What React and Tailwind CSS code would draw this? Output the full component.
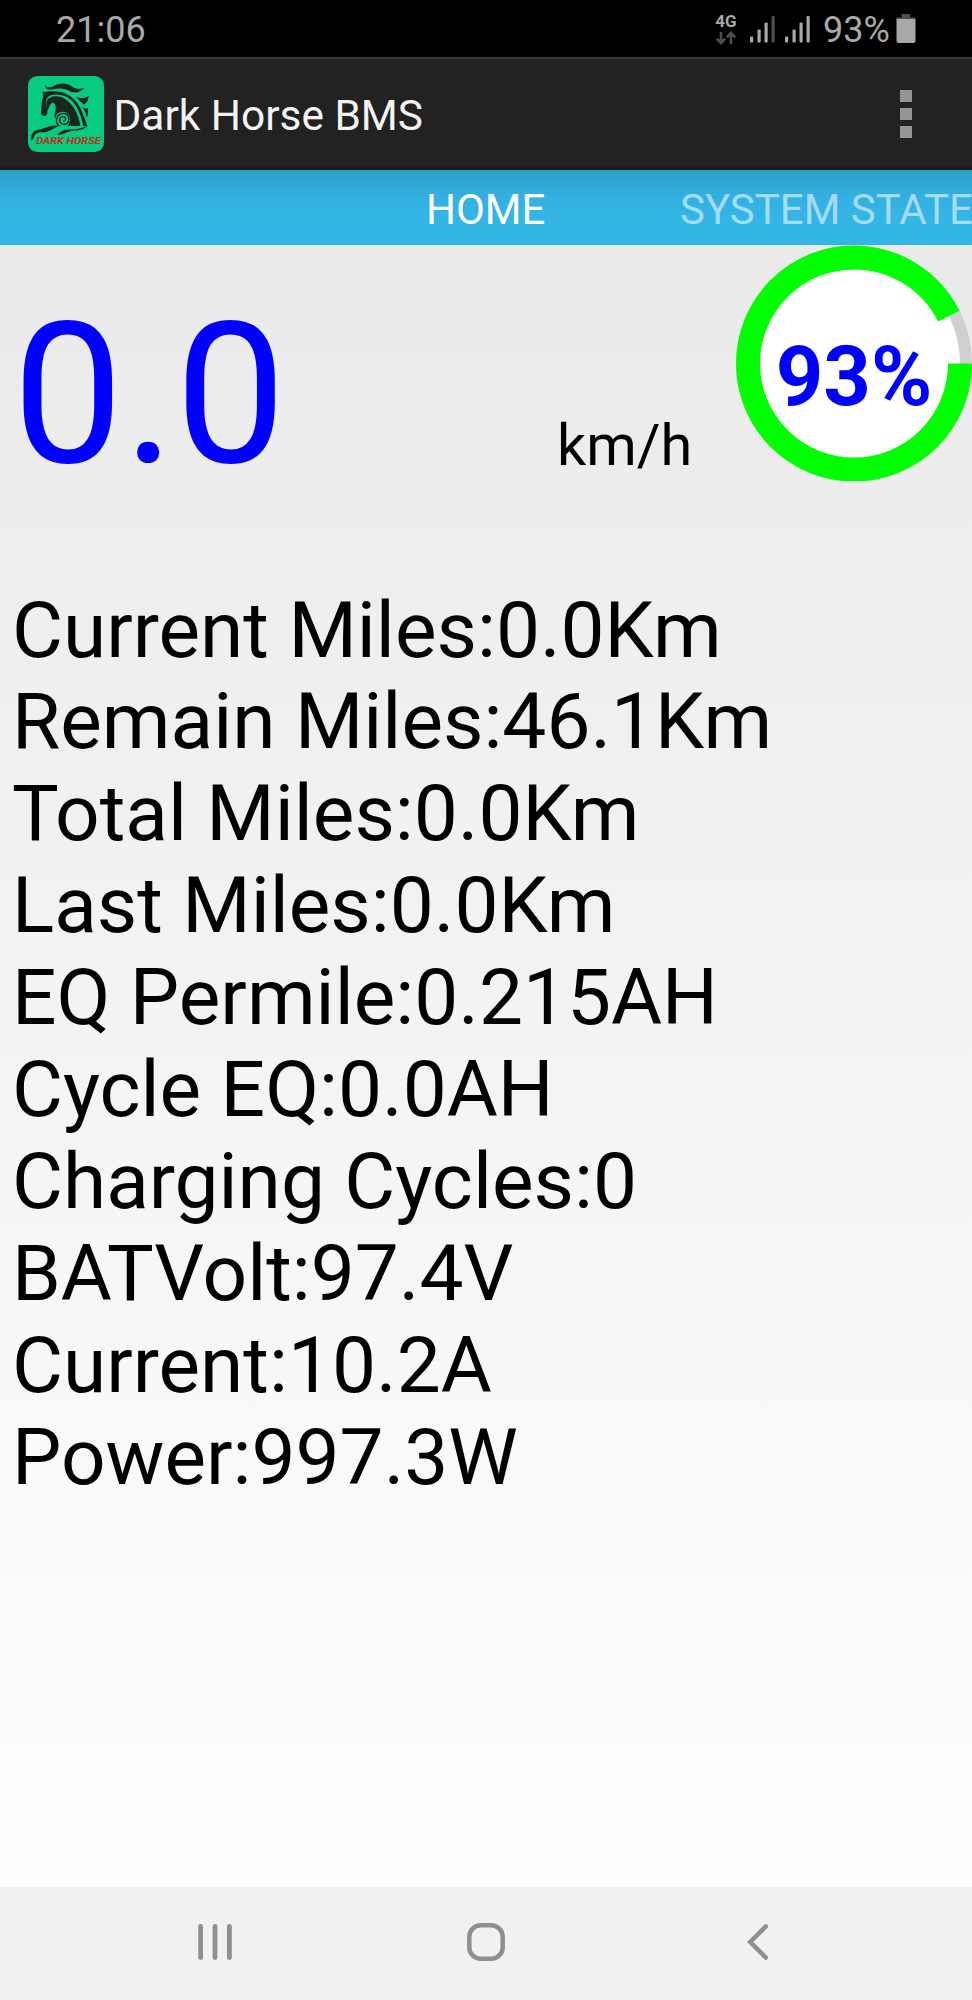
const stats = [
  ['Current Miles', '0.0Km'],
  ['Remain Miles', '46.1Km'],
  ['Total Miles', '0.0Km'],
  ['Last Miles', '0.0Km'],
  ['EQ Permile', '0.215AH'],
  ['Cycle EQ', '0.0AH'],
  ['Charging Cycles', '0'],
  ['BATVolt', '97.4V'],
  ['Current', '10.2A'],
  ['Power', '997.3W'],
];

function SignalBars({ lastDim }) {
  return (
    <svg width="25" height="27" viewBox="0 0 25 27" className="shrink-0" fill="#a8a8a8">
      <rect x="0" y="20.5" width="3.2" height="6" rx="1" />
      <rect x="7.5" y="13.5" width="3.2" height="13" rx="1" />
      <rect x="14.5" y="6.5" width="3.2" height="20" rx="1" />
      <rect x="21.5" y="0" width="3.2" height="26.5" rx="1" fill={lastDim ? '#4d4d4d' : '#a8a8a8'} />
    </svg>
  );
}

function StatusBar() {
  return (
    <div className="flex h-[57px] items-start bg-black text-[#a8a8a8]">
      <div className="ml-[56px] mt-[9px] text-[36px] leading-[42px]">21:06</div>
      <div className="ml-auto mr-[56px] flex items-start">
        <div className="mt-[14px] flex w-[22px] flex-col items-center">
          <span className="text-[17px] font-bold leading-[15px]">4G</span>
          <svg width="20" height="14" viewBox="0 0 20 14" className="mt-[2px]" fill="none" stroke="#4d4d4d" strokeWidth="2.6">
            <path d="M5 1v11M0.8 7.6L5 12L9.2 7.6" />
            <path d="M15 13V2M10.8 6.4L15 2L19.2 6.4" />
          </svg>
        </div>
        <div className="ml-[13px] mt-[15.5px]"><SignalBars lastDim /></div>
        <div className="ml-[10px] mt-[15.5px]"><SignalBars /></div>
        <span className="ml-[13px] mt-[9px] w-[68px] text-[36px] leading-[42px]">93%</span>
        <svg width="20" height="30" viewBox="0 0 20 30" className="ml-[5px] mt-[13px]">
          <path d="M5.500 1h8.500v3.500h5v3H0.500v-3h5z" fill="#4d4d4d" />
          <path d="M0.500 6h19v22q0 2-2 2h-15q-2 0-2-2z" fill="#a8a8a8" />
        </svg>
      </div>
    </div>
  );
}

function HorseLogo() {
  return (
    <svg width="76" height="76" viewBox="24 28 228 228" className="shrink-0">
      <rect x="24" y="28" width="228" height="228" rx="28" fill="#06cb80" />
      <g fill="#1c2420">
        <path d="M75 54C80 64 92 63 103 57C122 47 142 49 157 60C168 67 180 68 192 63C184 75 168 81 152 75C138 66 118 63 100 68C86 71 75 68 75 54Z" />
        <path d="M68 72C71 78 78 76 90 74C130 70 162 88 180 122C190 142 196 160 202 179L190 178C184 148 174 122 156 102C138 85 112 80 92 86C84 89 79 96 77 106L81 129C84 138 81 148 73 148C66 148 62 143 63 134C66 118 63 106 69 94C71 88 67 80 68 72Z" />
        <path d="M79 104C88 88 112 84 134 96C160 112 176 142 181 178L142 177C156 164 152 140 134 136C117 133 106 145 106 158C99 148 109 132 107 120C105 108 98 105 92 112C88 118 86 130 79 134Z" />
        <path d="M168 90C182 97 196 94 208 87C202 96 206 106 190 114C188 106 178 104 168 90Z" />
        <path d="M187 122C194 126 199 125 205 123C202 132 206 146 200 152C199 142 194 132 187 122Z" />
        <path d="M34 222C30 202 42 190 62 188C82 180 98 174 118 177C102 183 88 197 66 197C50 196 42 204 40 218Z" />
        <path d="M112 204C120 194 138 187 156 188C172 189 188 184 201 179C190 190 174 192 158 192C142 194 132 204 112 204Z" />
      </g>
      <path d="M118 178C104 168 108 142 129 140C150 140 153 168 134 173C118 173 114 154 127 150C139 149 140 164 130 163" fill="none" stroke="#1c2420" strokeWidth="4" />
      <text x="49" y="232" textLength="193" lengthAdjust="spacingAndGlyphs" fill="#c62b20" fontFamily="Roboto, sans-serif" fontWeight="700" fontStyle="italic" fontSize="29">DARK HORSE</text>
    </svg>
  );
}

function ActionBar() {
  return (
    <div className="flex h-[113px] items-center border-b-4 border-t-2 border-b-[#1b1b1b] border-t-[#3b3b3b] bg-[#222222] pl-[28px] pr-[60px] pt-[2px]">
      <HorseLogo />
      <h1 className="ml-[9.500px] pt-[4px] text-[42.400px] leading-[50px] text-[#f3f3f3]">Dark Horse BMS</h1>
      <div className="ml-auto flex flex-col gap-[6px]">
        <span className="size-[12px] bg-[#959595]" />
        <span className="size-[12px] bg-[#959595]" />
        <span className="size-[12px] bg-[#959595]" />
      </div>
    </div>
  );
}

function Tabs() {
  return (
    <div className="flex h-[75px] items-center overflow-hidden whitespace-nowrap bg-linear-to-b from-[#2c9dc8] via-[#33b0e1] via-35% to-[#33b5e5] to-60% pt-[4px] text-[42px] leading-[50px]">
      <span className="ml-[426px] w-[254px] shrink-0 text-white">HOME</span>
      <span className="shrink-0 text-[#a3dcf4]">SYSTEM STATE</span>
    </div>
  );
}

function BatteryRing() {
  return (
    <div className="grid size-[236px] shrink-0 place-items-center">
      <svg width="236" height="236" viewBox="0 0 236 236" className="col-start-1 row-start-1">
        <circle cx="118" cy="118.500" r="112" fill="#fff" stroke="#d0d0d0" strokeWidth="12" />
        <circle cx="118" cy="118.500" r="106" fill="none" stroke="#00ff00" strokeWidth="24" pathLength="360" strokeDasharray="333.500 26.500" />
      </svg>
      <span className="col-start-1 row-start-1 pt-[27px] text-[83px] font-bold leading-[96px] text-[#0000ff]">93%</span>
    </div>
  );
}

function NavBar() {
  return (
    <div className="flex h-[113px] items-center bg-[#f1f1f1] pb-[4px] pl-[197px] pr-[202px]">
      <svg width="36" height="46" viewBox="0 0 36 46" stroke="#8f8f8f" strokeWidth="4.800" strokeLinecap="round">
        <path d="M3.600 7.400V38.600M18 7.400V38.600M32.400 7.400V38.600" />
      </svg>
      <svg width="40" height="46" viewBox="0 0 40 46" className="ml-[233px]" fill="none" stroke="#8f8f8f" strokeWidth="4.500">
        <rect x="3.300" y="6.300" width="33.400" height="33.400" rx="11.500" />
      </svg>
      <svg width="24" height="46" viewBox="0 0 24 46" className="ml-auto" fill="none" stroke="#8f8f8f" strokeWidth="4.500" strokeLinecap="round">
        <path d="M19.800 7.400L4.200 23L19.800 38.600" />
      </svg>
    </div>
  );
}

export default function App() {
  return (
    <div className="flex h-[2000px] w-[972px] flex-col overflow-hidden bg-white font-['Roboto',sans-serif] text-black">
      <StatusBar />
      <ActionBar />
      <Tabs />
      <main className="flex flex-1 flex-col bg-linear-to-b from-[#eaeaea] to-[#fefefe]">
        <section className="flex h-[339px] items-start">
          <div className="ml-[12.500px] mt-[34px] w-[544.500px] text-[197px] leading-[231px] text-[#0000ff]">0.0</div>
          <div className="mt-[167px] w-[179px] text-[57.600px] leading-[68px]">km/h</div>
          <BatteryRing />
        </section>
        <section className="pl-[12px] pt-[0.500px] text-[78.350px] leading-[91.900px]">
          {stats.map(([label, value]) => (
            <div key={label} className="whitespace-nowrap">{label}:{value}</div>
          ))}
        </section>
      </main>
      <NavBar />
    </div>
  );
}
